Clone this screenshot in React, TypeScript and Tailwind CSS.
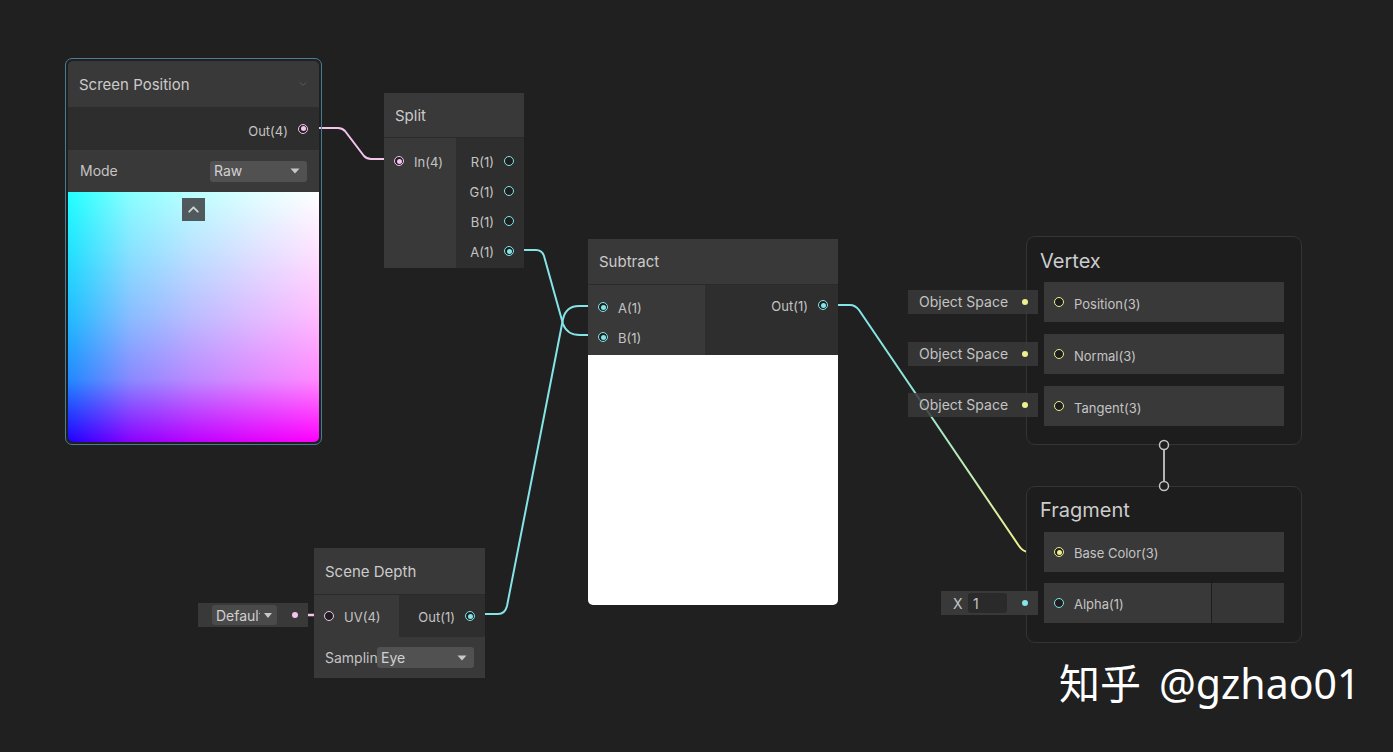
import { ChevronDown, ChevronUp } from "lucide-react";

type Tone = "pink" | "cyan" | "yellow";

const ring: Record<Tone, string> = {
  pink: "border-[#f3c4ec]",
  cyan: "border-[#84e4e7]",
  yellow: "border-[#eef08e]",
};
const fill: Record<Tone, string> = {
  pink: "bg-[#f3c4ec]",
  cyan: "bg-[#84e4e7]",
  yellow: "bg-[#eef08e]",
};

function Port({ tone, filled = false }: { tone: Tone; filled?: boolean }) {
  return (
    <span
      className={`flex h-[10px] w-[10px] shrink-0 items-center justify-center rounded-full border-[1.5px] bg-[#1e1e1e] ${ring[tone]}`}
    >
      {filled && <span className={`h-[5px] w-[5px] rounded-full ${fill[tone]}`} />}
    </span>
  );
}

function Dot({ tone }: { tone: Tone }) {
  return <span className={`block h-[6px] w-[6px] shrink-0 rounded-full ${fill[tone]}`} />;
}

function Caret() {
  return (
    <svg width="10" height="6" viewBox="0 0 10 6" className="shrink-0">
      <path d="M0.5 0.5 H9.5 L5 5.5 Z" fill="#c8c8c8" />
    </svg>
  );
}

function Dropdown({ label, className = "" }: { label: string; className?: string }) {
  return (
    <div
      className={`flex h-[21px] items-center justify-between rounded-[3px] bg-[#515151] pl-[4px] pr-[7px] text-[14px] text-[#d2d2d2] ${className}`}
    >
      <span className="leading-none">{label}</span>
      <Caret />
    </div>
  );
}

function Header({ title, h }: { title: string; h: string }) {
  return (
    <div className={`flex items-center bg-[#393939] pl-[11px] text-[15px] text-[#cbcbcb] ${h}`}>
      <span className="translate-y-[1px]">{title}</span>
    </div>
  );
}

function InRow({ tone, label, filled }: { tone: Tone; label: string; filled?: boolean }) {
  return (
    <div className="flex h-[30px] items-center gap-[10px] pl-[10px] text-[13px] text-[#c4c4c4]">
      <Port tone={tone} filled={filled} />
      <span className="translate-y-[2px]">{label}</span>
    </div>
  );
}

function OutRow({ tone, label, filled }: { tone: Tone; label: string; filled?: boolean }) {
  return (
    <div className="flex h-[30px] items-center justify-end gap-[10px] pr-[10px] text-[13px] text-[#c4c4c4]">
      <span className="translate-y-[2px]">{label}</span>
      <Port tone={tone} filled={filled} />
    </div>
  );
}

function Wires() {
  const stub = "#5e5e5e";
  return (
    <svg className="absolute inset-0" width="1393" height="752" fill="none" strokeWidth="2" strokeLinecap="round" strokeLinejoin="round">
      <defs>
        <linearGradient id="cy" gradientUnits="userSpaceOnUse" x1="859" y1="310" x2="1020" y2="547">
          <stop offset="0" stopColor="#84e4e7" />
          <stop offset="0.35" stopColor="#8fe6d6" />
          <stop offset="1" stopColor="#eef08e" />
        </linearGradient>
      </defs>
      {/* screen position -> split */}
      <path d="M318 128 L338 128 Q342 128 345 131 L364 156 Q367 159 371 159 L389 159" stroke="#f3c4ec" />
      <path d="M308 128 L318 128 M389 159 L395 159" stroke={stub} />
      {/* split A -> subtract B */}
      <path d="M522 250 L536 250 Q542 250 544 256 L563 324 Q567 335 580 335 L592 335" stroke="#84e4e7" />
      <path d="M514 250 L522 250 M592 335 L599 335" stroke={stub} />
      {/* scene depth -> subtract A */}
      <path d="M484 614 L498 614 Q505 614 507 606 L563 319 Q566 306 579 306 L592 306" stroke="#84e4e7" />
      <path d="M475 614 L484 614 M592 306 L599 306" stroke={stub} />
      {/* subtract -> base color */}
      <path d="M836 305 L850 305 Q855 305 859 310 L1019 546 Q1023 552 1029 552" stroke="url(#cy)" />
      <path d="M1029 552 L1046 552" stroke="#75755a" />
      <path d="M828 305 L836 305 M1046 552 L1055 552" stroke={stub} />
      {/* inline controls */}
      {[302, 354, 405].map((y) => (
        <g key={y}>
          <path d={`M1029 ${y} L1038 ${y}`} stroke={stub} />
          <path d={`M1038 ${y} L1055 ${y}`} stroke="#eef08e" strokeWidth="2.5" />
        </g>
      ))}
      <path d="M1029 603 L1038 603" stroke={stub} />
      <path d="M1038 603 L1055 603" stroke="#84e4e7" strokeWidth="2.5" />
      <path d="M299 615 L308 615" stroke={stub} />
      <path d="M308 615 L325 615" stroke="#f3c4ec" strokeWidth="2.5" />
    </svg>
  );
}

function FlowLink() {
  return (
    <svg className="absolute left-[1154px] top-[436px]" width="20" height="60" fill="none">
      <path d="M10 14 L10 45" stroke="#b4b4b4" strokeWidth="2" />
      <circle cx="10" cy="9" r="4.5" stroke="#c4c4c4" strokeWidth="1.5" fill="#1f1f1f" />
      <circle cx="10" cy="50" r="4.5" stroke="#c4c4c4" strokeWidth="1.5" fill="#1f1f1f" />
    </svg>
  );
}

function Block({ children, className = "" }: { children: React.ReactNode; className?: string }) {
  return (
    <div className={`flex h-[40px] items-center gap-[10px] bg-[#393939] pl-[10px] text-[13px] text-[#c4c4c4] ${className}`}>
      {children}
    </div>
  );
}

function ObjectSpace({ top }: { top: string }) {
  return (
    <div
      className={`absolute left-[908px] flex h-[24px] w-[130px] items-center justify-between bg-[#393939]/85 pl-[11px] pr-[10px] text-[14px] text-[#c4c4c4] ${top}`}
    >
      <span className="-translate-y-[1px]">Object Space</span>
      <Dot tone="yellow" />
    </div>
  );
}

export default function App() {
  return (
    <div className="relative h-[752px] w-[1393px] overflow-hidden bg-[#202020] [font-family:Inter,'Noto_Sans',sans-serif]">
      <Wires />

      {/* Screen Position */}
      <div className="absolute left-[65px] top-[58px] rounded-[7px] border border-[#4a7c98] p-[2px]">
        <div className="flex w-[251px] flex-col overflow-hidden rounded-[5px]">
          <div className="flex h-[46px] items-center justify-between bg-[#393939] pl-[11px] pr-[10px]">
            <span className="translate-y-[1px] text-[15px] text-[#cbcbcb]">Screen Position</span>
            <ChevronDown className="h-[12px] w-[12px] text-[#5a5a5a]" />
          </div>
          <div className="flex h-[43px] items-center justify-end gap-[10px] bg-[#2d2d2d] pr-[11px] text-[13px] text-[#c4c4c4]">
            <span className="translate-y-[3px]">Out(4)</span>
            <Port tone="pink" filled />
          </div>
          <div className="flex h-[42px] items-center justify-between bg-[#393939] px-[12px]">
            <span className="-translate-y-[1px] text-[14px] text-[#c4c4c4]">Mode</span>
            <Dropdown label="Raw" className="w-[97px]" />
          </div>
          <div className="relative h-[250px] bg-[linear-gradient(to_top,#000_0%,#008900_25%,#00bc00_50%,#00e000_75%,#0f0_100%),linear-gradient(to_right,#2000ff_0%,#8900ff_25%,#bc00ff_50%,#e000ff_75%,#f0f_100%)] bg-blend-screen">
            <div className="absolute left-[114px] top-[6px] flex h-[23px] w-[23px] items-center justify-center bg-[#505a5d]">
              <ChevronUp className="h-[17px] w-[17px] text-[#d0d0d0]" strokeWidth={2.75} />
            </div>
          </div>
        </div>
      </div>

      {/* Split */}
      <div className="absolute left-[384px] top-[93px] flex w-[140px] flex-col bg-[#2a2a2a]">
        <Header title="Split" h="h-[44px]" />
        <div className="mt-px flex h-[130px]">
          <div className="w-[72px] bg-[#393939] pt-[8px]">
            <InRow tone="pink" label="In(4)" filled />
          </div>
          <div className="w-[68px] bg-[#2e2e2e] pt-[8px]">
            <OutRow tone="cyan" label="R(1)" />
            <OutRow tone="cyan" label="G(1)" />
            <OutRow tone="cyan" label="B(1)" />
            <OutRow tone="cyan" label="A(1)" filled />
          </div>
        </div>
      </div>

      {/* Subtract */}
      <div className="absolute left-[588px] top-[239px] flex w-[250px] flex-col overflow-hidden rounded-b-[5px] bg-[#2a2a2a]">
        <Header title="Subtract" h="h-[45px]" />
        <div className="mt-px flex h-[70px]">
          <div className="w-[117px] bg-[#393939] pt-[7px]">
            <InRow tone="cyan" label="A(1)" filled />
            <InRow tone="cyan" label="B(1)" filled />
          </div>
          <div className="w-[133px] bg-[#2e2e2e] pt-[5px]">
            <OutRow tone="cyan" label="Out(1)" filled />
          </div>
        </div>
        <div className="h-[250px] bg-white" />
      </div>

      {/* Scene Depth */}
      <div className="absolute left-[314px] top-[548px] flex w-[171px] flex-col bg-[#2a2a2a]">
        <Header title="Scene Depth" h="h-[46px]" />
        <div className="mt-px flex h-[42px]">
          <div className="flex w-[85px] items-center bg-[#393939]">
            <InRow tone="pink" label="UV(4)" />
          </div>
          <div className="flex w-[86px] items-center justify-end bg-[#2e2e2e]">
            <OutRow tone="cyan" label="Out(1)" filled />
          </div>
        </div>
        <div className="flex h-[41px] items-center bg-[#393939] pl-[11px]">
          <span className="w-[52px] overflow-hidden whitespace-nowrap text-[14px] text-[#c4c4c4]">Sampling</span>
          <Dropdown label="Eye" className="w-[97px]" />
        </div>
      </div>

      {/* UV default control */}
      <div className="absolute left-[198px] top-[603px] flex h-[24px] w-[110px] items-center bg-[#393939] pl-[14px] pr-[10px]">
        <div className="flex h-[20px] w-[65px] items-center gap-[4px] rounded-[3px] bg-[#4a4a4a] pl-[4px] text-[14px] text-[#d0d0d0]">
          <span className="w-[44px] overflow-hidden whitespace-nowrap">Default</span>
          <svg width="8" height="5" viewBox="0 0 8 5">
            <path d="M0 0 H8 L4 5 Z" fill="#c8c8c8" />
          </svg>
        </div>
        <span className="ml-auto">
          <Dot tone="pink" />
        </span>
      </div>

      {/* Vertex context */}
      <div className="absolute left-[1026px] top-[236px] flex h-[209px] w-[276px] flex-col rounded-[9px] border border-[#343434] bg-[#1d1d1d] px-[17px] pt-[11px]">
        <div className="mb-[6px] flex h-[28px] items-center text-[20px] text-[#cccccc]">
          <span className="-ml-[4px] -translate-y-[1px]">Vertex</span>
        </div>
        <div className="flex flex-col gap-[12px]">
          <Block>
            <Port tone="yellow" />
            <span className="translate-y-[3px]">Position(3)</span>
          </Block>
          <Block>
            <Port tone="yellow" />
            <span className="translate-y-[3px]">Normal(3)</span>
          </Block>
          <Block>
            <Port tone="yellow" />
            <span className="translate-y-[3px]">Tangent(3)</span>
          </Block>
        </div>
      </div>

      {/* Fragment context */}
      <div className="absolute left-[1026px] top-[486px] flex h-[157px] w-[276px] flex-col rounded-[9px] border border-[#343434] bg-[#1d1d1d] px-[17px] pt-[10px]">
        <div className="mb-[7px] flex h-[28px] items-center text-[20px] text-[#cccccc]">
          <span className="-ml-[4px] -translate-y-[1px]">Fragment</span>
        </div>
        <div className="flex flex-col gap-[11px]">
          <Block>
            <Port tone="yellow" filled />
            <span className="translate-y-[2px]">Base Color(3)</span>
          </Block>
          <div className="flex h-[40px]">
            <Block className="w-[167px]">
              <Port tone="cyan" />
              <span className="translate-y-[2px]">Alpha(1)</span>
            </Block>
            <div className="ml-px flex-1 bg-[#363636]" />
          </div>
        </div>
      </div>

      <FlowLink />

      <ObjectSpace top="top-[290px]" />
      <ObjectSpace top="top-[342px]" />
      <ObjectSpace top="top-[393px]" />

      {/* Alpha inline control */}
      <div className="absolute left-[941px] top-[591px] flex h-[24px] w-[97px] items-center bg-[#393939] pl-[12px] pr-[10px] text-[14px] text-[#c4c4c4]">
        <span className="w-[15px]">X</span>
        <span className="flex h-[20px] w-[39px] items-center rounded-[3px] bg-[#2a2a2a] pl-[5px]">1</span>
        <span className="ml-auto">
          <Dot tone="cyan" />
        </span>
      </div>

      {/* watermark */}
      <div className="absolute left-[1059px] top-[663px] flex items-baseline gap-[18px] whitespace-nowrap text-[41px] leading-none text-white [font-family:'Noto_Sans','Noto_Sans_CJK_SC',sans-serif]">
        <span>知乎</span>
        <span>@gzhao01</span>
      </div>
    </div>
  );
}
